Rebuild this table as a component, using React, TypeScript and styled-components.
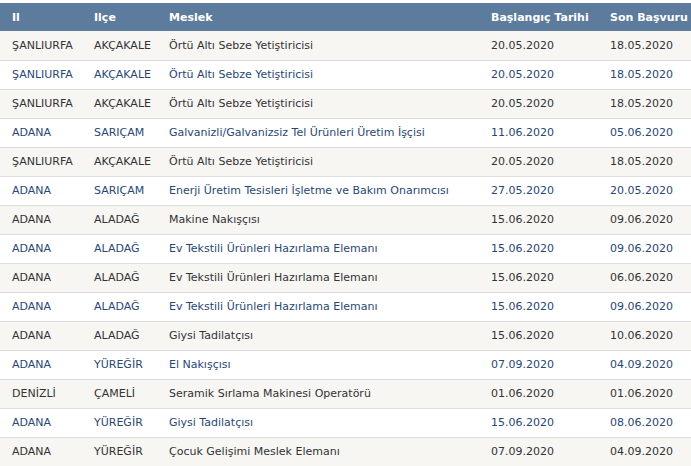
import * as React from 'react';
import styled, { createGlobalStyle } from 'styled-components';

const GlobalStyle = createGlobalStyle`
    body {
        margin: 0;
        background: #ffffff;
        font-family: Verdana, "DejaVu Sans", sans-serif;
        overflow: hidden;
    }
`;

const Wrap = styled.div`
    width: 691px;
    height: 466px;
    overflow: hidden;
    padding-top: 3px;
    box-sizing: border-box;
`;

const Grid = styled.table`
    width: 710px;
    table-layout: fixed;
    border-collapse: collapse;
    font-size: 11px;
`;

const HeadRow = styled.tr`
    background: #5d7b9d;
    color: #ffffff;
    height: 28px;
`;

const HeadCell = styled.th<{ $w: number }>`
    box-sizing: border-box;
    width: ${p => p.$w}px;
    text-align: left;
    font-weight: bold;
    padding: 0 0 0 12px;
    white-space: nowrap;
`;

const Row = styled.tr<{ $alt: boolean }>`
    background: ${p => (p.$alt ? '#ffffff' : '#f7f6f3')};
    color: ${p => (p.$alt ? '#284775' : '#333333')};
    height: 29px;
    border-bottom: 1px solid #dddddd;
`;

const Cell = styled.td`
    box-sizing: border-box;
    padding: 0 0 0 12px;
    white-space: nowrap;
    overflow: hidden;
`;

type jobType = {
    il: string;
    ilce: string;
    meslek: string;
    baslangic: string;
    son: string;
};

const columns = [
    { title: 'Il', w: 82 },
    { title: 'Ilçe', w: 75 },
    { title: 'Meslek', w: 322 },
    { title: 'Başlangıç Tarihi', w: 119 },
    { title: 'Son Başvuru', w: 112 },
];

const jobs: jobType[] = [
    { il: 'ŞANLIURFA', ilce: 'AKÇAKALE', meslek: 'Örtü Altı Sebze Yetiştiricisi', baslangic: '20.05.2020', son: '18.05.2020' },
    { il: 'ŞANLIURFA', ilce: 'AKÇAKALE', meslek: 'Örtü Altı Sebze Yetiştiricisi', baslangic: '20.05.2020', son: '18.05.2020' },
    { il: 'ŞANLIURFA', ilce: 'AKÇAKALE', meslek: 'Örtü Altı Sebze Yetiştiricisi', baslangic: '20.05.2020', son: '18.05.2020' },
    { il: 'ADANA', ilce: 'SARIÇAM', meslek: 'Galvanizli/Galvanizsiz Tel Ürünleri Üretim İşçisi', baslangic: '11.06.2020', son: '05.06.2020' },
    { il: 'ŞANLIURFA', ilce: 'AKÇAKALE', meslek: 'Örtü Altı Sebze Yetiştiricisi', baslangic: '20.05.2020', son: '18.05.2020' },
    { il: 'ADANA', ilce: 'SARIÇAM', meslek: 'Enerji Üretim Tesisleri İşletme ve Bakım Onarımcısı', baslangic: '27.05.2020', son: '20.05.2020' },
    { il: 'ADANA', ilce: 'ALADAĞ', meslek: 'Makine Nakışçısı', baslangic: '15.06.2020', son: '09.06.2020' },
    { il: 'ADANA', ilce: 'ALADAĞ', meslek: 'Ev Tekstili Ürünleri Hazırlama Elemanı', baslangic: '15.06.2020', son: '09.06.2020' },
    { il: 'ADANA', ilce: 'ALADAĞ', meslek: 'Ev Tekstili Ürünleri Hazırlama Elemanı', baslangic: '15.06.2020', son: '06.06.2020' },
    { il: 'ADANA', ilce: 'ALADAĞ', meslek: 'Ev Tekstili Ürünleri Hazırlama Elemanı', baslangic: '15.06.2020', son: '09.06.2020' },
    { il: 'ADANA', ilce: 'ALADAĞ', meslek: 'Giysi Tadilatçısı', baslangic: '15.06.2020', son: '10.06.2020' },
    { il: 'ADANA', ilce: 'YÜREĞİR', meslek: 'El Nakışçısı', baslangic: '07.09.2020', son: '04.09.2020' },
    { il: 'DENİZLİ', ilce: 'ÇAMELİ', meslek: 'Seramik Sırlama Makinesi Operatörü', baslangic: '01.06.2020', son: '01.06.2020' },
    { il: 'ADANA', ilce: 'YÜREĞİR', meslek: 'Giysi Tadilatçısı', baslangic: '15.06.2020', son: '08.06.2020' },
    { il: 'ADANA', ilce: 'YÜREĞİR', meslek: 'Çocuk Gelişimi Meslek Elemanı', baslangic: '07.09.2020', son: '04.09.2020' },
];

const App = () => {
    return (
        <Wrap>
            <GlobalStyle />
            <Grid>
                <thead>
                    <HeadRow>
                        {columns.map((c, key) => (
                            <HeadCell key={key} $w={c.w}>{c.title}</HeadCell>
                        ))}
                    </HeadRow>
                </thead>
                <tbody>
                    {jobs.map((val, key) => (
                        <Row key={key} $alt={key % 2 === 1}>
                            <Cell>{val.il}</Cell>
                            <Cell>{val.ilce}</Cell>
                            <Cell>{val.meslek}</Cell>
                            <Cell>{val.baslangic}</Cell>
                            <Cell>{val.son}</Cell>
                        </Row>
                    ))}
                </tbody>
            </Grid>
        </Wrap>
    );
};

export default App;
